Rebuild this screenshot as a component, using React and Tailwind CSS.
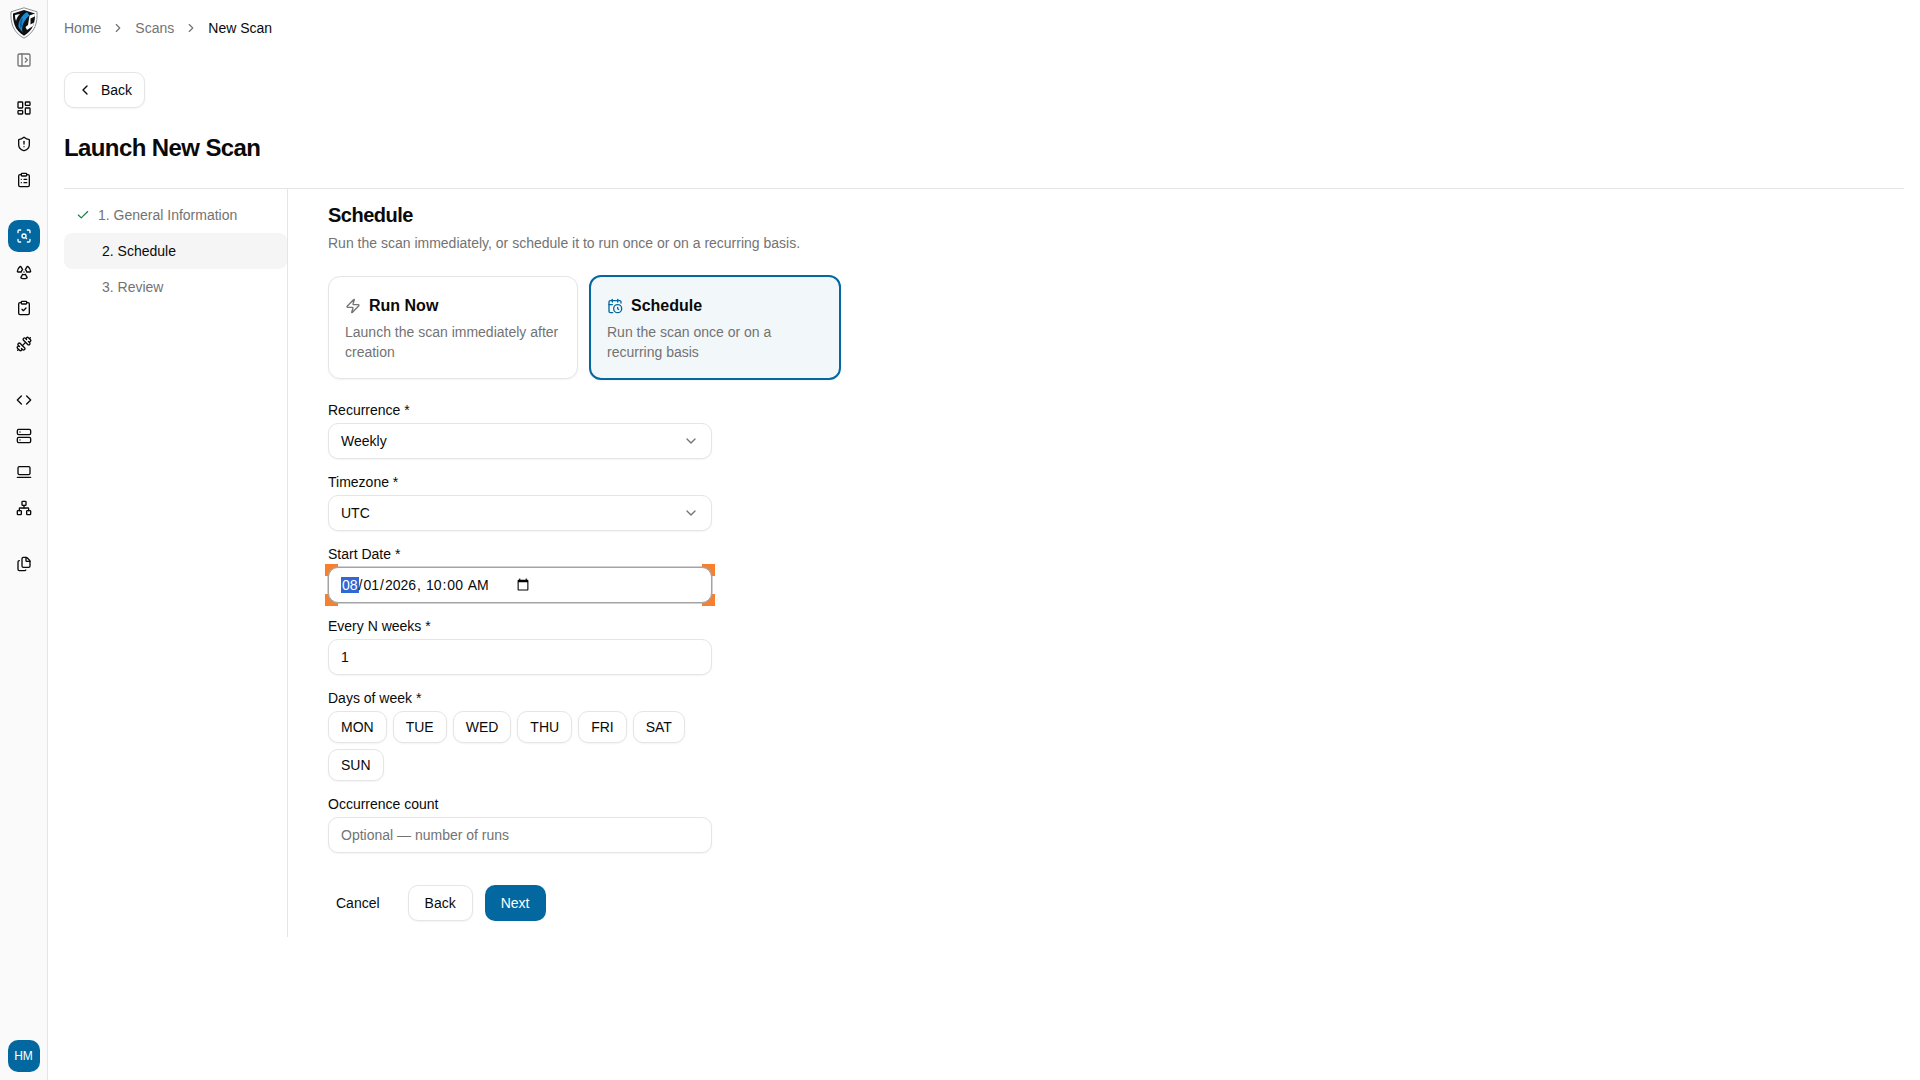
import React from "react";
import { PanelLeftOpen, LayoutDashboard, ShieldAlert, ClipboardList, ScanSearch, Radiation, ClipboardCheck, Dumbbell, Code, Server, LaptopMinimal, Network, Files, ChevronRight, ChevronLeft, ChevronDown, Check, Zap, CalendarClock } from "lucide-react";

function Logo() {
  return (
    <svg width="28" height="32" viewBox="0 0 28 32">
      <path d="M14 .8 L27 4.8 C27.6 15 25.5 25 14 31.2 C2.5 25 .4 15 1 4.8 Z" fill="#fff" stroke="#8a8f96" strokeWidth="1" />
      <path d="M14 3 L25 6.4 C25.3 14.5 23.5 23 14 28.8 C4.5 23 2.7 14.5 3 6.4 Z" fill="#0d0f13" />
      <path d="M17 5 C12 8 8 14 8.5 20 L12.5 25.5 C11 19 14.5 12.5 19.5 8.5 Z" fill="#1a8ad4" />
      <path d="M11 12 C9.5 15 9.5 18 10.5 21 L12 19 C11.5 16.5 11.5 14.5 13 11 Z" fill="#0f5c96" />
      <path d="M19.5 8.5 L25 6.4 L24.8 9.5 L20.5 11.5 L20.5 17.5 L24 15.5 L23 19 L17 23 L15.5 20 L18 18 Z" fill="#fff" />
      <path d="M5 8 L10 7 C8 9 6.5 11.5 6 14 C5.2 12 5 10 5 8 Z" fill="#fff" />
    </svg>
  );
}

function NavBtn({ icon: Icon, active }) {
  return (
    <button className={`flex h-8 w-8 items-center justify-center rounded-[10px] ${active ? "bg-[#03689f] text-white" : "text-[#0a0a0a]"}`}>
      <Icon size={16} strokeWidth={2} />
    </button>
  );
}

function Field({ label, children }) {
  return (
    <div className="flex flex-col gap-1.5">
      <label className="text-sm leading-[14px] text-[#0a0a0a]">{label}</label>
      {children}
    </div>
  );
}

function Select({ value }) {
  return (
    <button className="flex h-9 w-full items-center justify-between rounded-[10px] border border-[#e5e5e5] bg-white px-3 text-sm text-[#0a0a0a] shadow-xs">
      <span>{value}</span>
      <ChevronDown size={16} className="text-[#737373]" />
    </button>
  );
}

function Corner({ className }) {
  return <span className={`pointer-events-none absolute z-0 h-[12px] w-[13px] bg-[#f97f2a] ${className}`} />;
}

function Day({ children }) {
  return (
    <button className="h-8 rounded-[10px] border border-[#e5e5e5] bg-white px-3 text-sm text-[#0a0a0a] shadow-xs">{children}</button>
  );
}

export default function App() {
  return (
    <div className="flex min-h-[1080px] bg-white font-['Liberation_Sans',Arial,sans-serif] text-sm text-[#0a0a0a]">
      <aside className="flex h-[1080px] w-[48px] shrink-0 flex-col items-center border-r border-[#e5e5e5] bg-[#fafafa] pb-2">
        <div className="mt-[7px] flex h-8 items-center"><Logo /></div>
        <div className="mt-[5px] flex h-8 w-8 items-center justify-center text-[#737373]"><PanelLeftOpen size={16} /></div>
        <div className="mt-4 flex flex-col gap-1">
          <NavBtn icon={LayoutDashboard} />
          <NavBtn icon={ShieldAlert} />
          <NavBtn icon={ClipboardList} />
        </div>
        <div className="mt-6 flex flex-col gap-1">
          <NavBtn icon={ScanSearch} active />
          <NavBtn icon={Radiation} />
          <NavBtn icon={ClipboardCheck} />
          <NavBtn icon={Dumbbell} />
        </div>
        <div className="mt-6 flex flex-col gap-1">
          <NavBtn icon={Code} />
          <NavBtn icon={Server} />
          <NavBtn icon={LaptopMinimal} />
          <NavBtn icon={Network} />
        </div>
        <div className="mt-6"><NavBtn icon={Files} /></div>
        <div className="mt-auto flex h-8 w-8 items-center justify-center rounded-[10px] bg-[#03689f] text-xs text-white">HM</div>
      </aside>

      <main className="flex min-w-0 flex-1 flex-col px-4">
        <nav className="flex h-[56px] items-center gap-2.5 text-[#737373]">
          <span>Home</span>
          <ChevronRight size={14} />
          <span>Scans</span>
          <ChevronRight size={14} />
          <span className="text-[#0a0a0a]">New Scan</span>
        </nav>
        <div className="mt-4">
          <button className="flex h-9 items-center gap-2 rounded-[10px] border border-[#e5e5e5] bg-white px-3 text-[#0a0a0a] shadow-xs">
            <ChevronLeft size={16} />
            <span>Back</span>
          </button>
        </div>
        <h1 className="mt-6 text-2xl leading-8 font-bold tracking-tight text-[#0a0a0a]">Launch New Scan</h1>
        <div className="mt-6 flex border-t border-[#e5e5e5]">
          <div className="flex w-[224px] shrink-0 flex-col border-r border-[#e5e5e5] pt-2">
            <div className="flex h-9 items-center gap-2 pl-3 text-[#737373]"><Check size={14} className="text-[#15803d]" /><span>1. General Information</span></div>
            <div className="flex h-9 items-center rounded-lg bg-[#f5f5f5] pl-[38px] text-[#0a0a0a]">2. Schedule</div>
            <div className="flex h-9 items-center pl-[38px] text-[#737373]">3. Review</div>
          </div>
          <div className="w-[740px] pt-3 pb-4 pl-10">
            <h2 className="text-xl leading-7 font-semibold tracking-tight text-[#0a0a0a]">Schedule</h2>
            <p className="mt-1 text-[#737373]">Run the scan immediately, or schedule it to run once or on a recurring basis.</p>
            <div className="mt-[23px] grid w-[512px] grid-cols-2 gap-3">
              <div className="flex h-[103px] flex-col rounded-xl border border-[#e5e5e5] bg-white px-4 pt-[17px] shadow-xs">
                <div className="flex items-center gap-2"><Zap size={16} className="text-[#737373]" /><span className="text-base font-semibold text-[#0a0a0a]">Run Now</span></div>
                <p className="mt-1 leading-5 text-[#737373]">Launch the scan immediately after creation</p>
              </div>
              <div className="-mx-px -my-px flex h-[105px] flex-col rounded-xl border-2 border-[#03689f] bg-[#f2f7fa] px-4 pt-[17px] shadow-xs">
                <div className="flex items-center gap-2"><CalendarClock size={16} className="text-[#03689f]" /><span className="text-base font-semibold text-[#0a0a0a]">Schedule</span></div>
                <p className="mt-1 leading-5 text-[#737373]">Run the scan once or on a recurring basis</p>
              </div>
            </div>
            <div className="mt-6 flex w-[384px] flex-col gap-4">
              <Field label="Recurrence *"><Select value="Weekly" /></Field>
              <Field label="Timezone *"><Select value="UTC" /></Field>
              <Field label="Start Date *">
                <div className="relative">
                  <input type="datetime-local" defaultValue="2026-08-01T10:00" autoFocus className="relative z-10 flex h-9 w-full rounded-[10px] border border-[#a3a3a3] bg-white px-3 text-sm text-[#0a0a0a] shadow-[0_0_0_1px_rgba(163,163,163,0.5)] outline-none" />
                  <Corner className="-top-[3px] -left-[3px]" />
                  <Corner className="-top-[3px] -right-[3px]" />
                  <Corner className="-bottom-[3px] -left-[3px]" />
                  <Corner className="-right-[3px] -bottom-[3px]" />
                </div>
              </Field>
              <Field label="Every N weeks *">
                <input type="text" defaultValue="1" className="h-9 w-full rounded-[10px] border border-[#e5e5e5] bg-white px-3 text-sm text-[#0a0a0a] shadow-xs outline-none" />
              </Field>
              <Field label="Days of week *">
                <div className="flex w-full flex-wrap gap-1.5">
                  {["MON", "TUE", "WED", "THU", "FRI", "SAT", "SUN"].map((d) => <Day key={d}>{d}</Day>)}
                </div>
              </Field>
              <Field label="Occurrence count">
                <input type="text" placeholder="Optional — number of runs" className="h-9 w-full rounded-[10px] border border-[#e5e5e5] bg-white px-3 text-sm text-[#0a0a0a] shadow-xs outline-none placeholder:text-[#737373]" />
              </Field>
            </div>
            <div className="mt-8 flex items-center gap-3">
              <button className="h-9 rounded-[10px] px-2 text-[#0a0a0a]">Cancel</button>
              <button className="ml-2 h-9 rounded-[10px] border border-[#e5e5e5] bg-white px-4 text-[#0a0a0a] shadow-xs">Back</button>
              <button className="h-9 rounded-[10px] bg-[#03689f] px-4 text-white">Next</button>
            </div>
          </div>
        </div>
      </main>
    </div>
  );
}
